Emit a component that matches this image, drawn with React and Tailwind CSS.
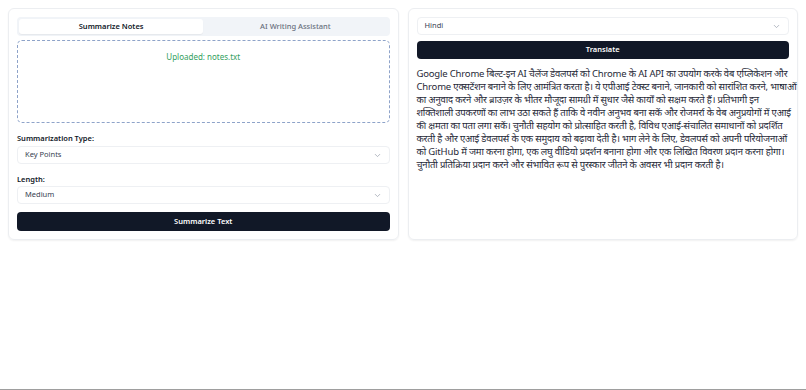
import React, { useState } from 'react'
import { ChevronDown } from 'lucide-react'

// line breaks as in the screenshot
const hindi = [
  'Google Chrome बिल्ट-इन AI चैलेंज डेवलपर्स को Chrome के AI API का उपयोग करके वेब एप्लिकेशन और',
  'Chrome एक्सटेंशन बनाने के लिए आमंत्रित करता है। ये एपीआई टेक्स्ट बनाने, जानकारी को सारांशित करने, भाषाओं',
  'का अनुवाद करने और ब्राउज़र के भीतर मौजूदा सामग्री में सुधार जैसे कार्यों को सक्षम करते हैं। प्रतिभागी इन',
  'शक्तिशाली उपकरणों का लाभ उठा सकते हैं ताकि वे नवीन अनुभव बना सकें और रोजमर्रा के वेब अनुप्रयोगों में एआई',
  'की क्षमता का पता लगा सकें। चुनौती सहयोग को प्रोत्साहित करती है, विविध एआई-संचालित समाधानों को प्रदर्शित',
  'करती है और एआई डेवलपर्स के एक समुदाय को बढ़ावा देती है। भाग लेने के लिए, डेवलपर्स को अपनी परियोजनाओं',
  'को GitHub में जमा करना होगा, एक लघु वीडियो प्रदर्शन बनाना होगा और एक लिखित विवरण प्रदान करना होगा।',
  'चुनौती प्रतिक्रिया प्रदान करने और संभावित रूप से पुरस्कार जीतने के अवसर भी प्रदान करती है।',
]

function Select({ value }) {
  return (
    <div className="flex items-center justify-between h-[18px] px-[7px] rounded-[4px] border border-[#eef0f3] bg-white text-[7.5px] text-[#374151]">
      <span>{value}</span>
      <ChevronDown size={9} className="text-[#9ca3af]" />
    </div>
  )
}

const App = () => {
  const [tab, settab] = useState('summarize')
  return (
    <div className="h-[390px] flex flex-col bg-white border-b border-[#9e9e9e] font-['Noto_Sans','Open_Sans',sans-serif]">
      <div className="grid grid-cols-2 gap-[9px] p-[8px]">
        {/* left card */}
        <div className="flex flex-col rounded-[6px] border border-[#eceef1] shadow-[0_1px_2px_rgba(0,0,0,0.06)] p-[8px]">
          <div className="grid grid-cols-2 h-[19px] p-[2px] rounded-[4px] bg-[#f1f4f8] text-[7.5px] font-semibold">
            <button
              className={tab === 'summarize' ? 'rounded-[3px] bg-white text-[#111827] shadow-[0_1px_1px_rgba(0,0,0,0.05)]' : 'text-[#6b7280] font-medium'}
              onClick={() => settab('summarize')}
            >
              Summarize Notes
            </button>
            <button
              className={tab === 'assistant' ? 'rounded-[3px] bg-white text-[#111827]' : 'text-[#6b7280] font-medium'}
              onClick={() => settab('assistant')}
            >
              AI Writing Assistant
            </button>
          </div>
          <div className="mt-[4px] h-[83px] rounded-[5px] border border-dashed border-[#8ea3c9] pt-[10px] text-center text-[8px] text-[#34a060]">
            Uploaded: notes.txt
          </div>
          <p className="mt-[9px] mb-[2px] text-[7.5px] leading-[12px] font-semibold text-[#111827]">Summarization Type:</p>
          <Select value="Key Points" />
          <p className="mt-[9px] mb-[1px] text-[7.5px] leading-[12px] font-semibold text-[#111827]">Length:</p>
          <Select value="Medium" />
          <button className="mt-[8px] h-[19px] rounded-[4px] bg-[#111827] text-white text-[7.5px] font-semibold">
            Summarize Text
          </button>
        </div>

        {/* right card */}
        <div className="flex flex-col rounded-[6px] border border-[#eceef1] shadow-[0_1px_2px_rgba(0,0,0,0.06)] p-[8px]">
          <div className="h-[20px]">
            <Select value="Hindi" />
          </div>
          <button className="mt-[4px] h-[18px] rounded-[4px] bg-[#111827] text-white text-[7.5px] font-semibold">
            Translate
          </button>
          <div className="mt-[8px] text-[9.5px] leading-[13px] tracking-[-0.18px] text-[#1f2937]">
            {hindi.map((l, i) => (
              <p key={i} className="whitespace-nowrap">{l}</p>
            ))}
          </div>
        </div>
      </div>
    </div>
  )
}

export default App
